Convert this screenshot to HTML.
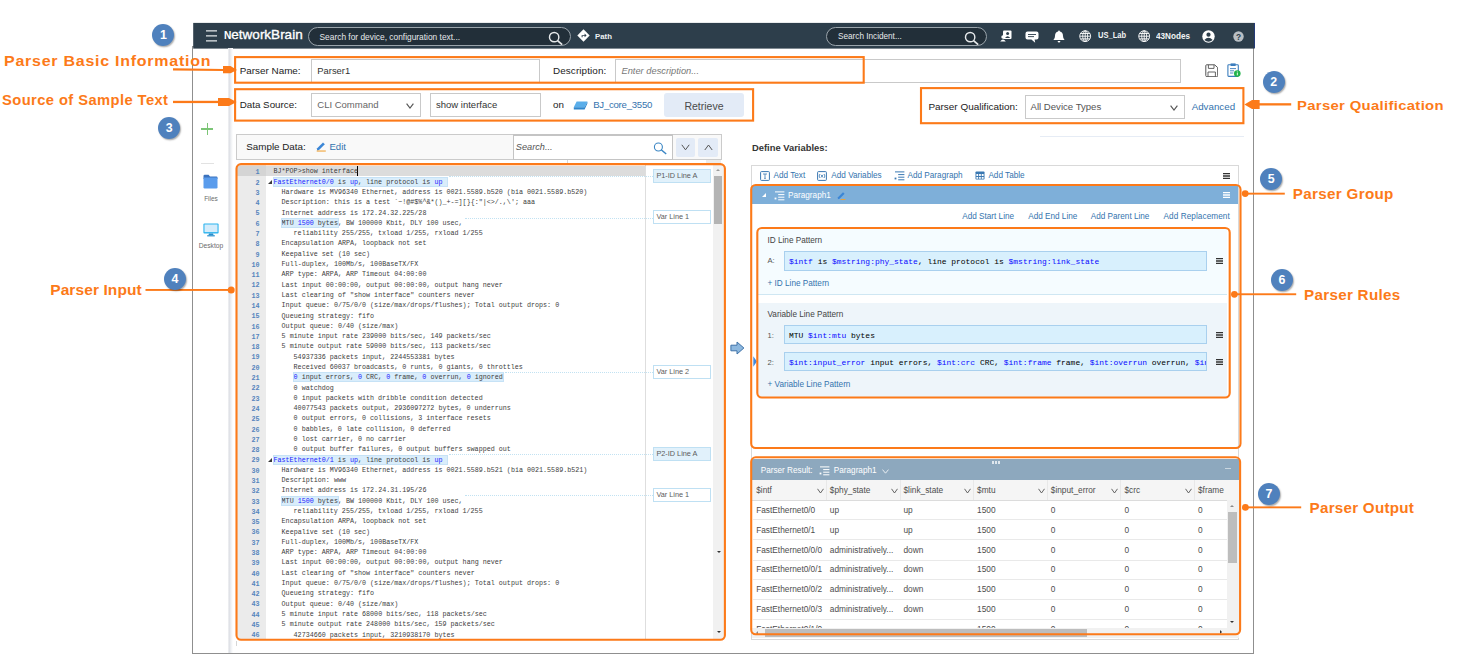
<!DOCTYPE html>
<html><head><meta charset="utf-8"><title>Parser</title>
<style>
html,body{margin:0;padding:0;background:#fff;}
body{width:1474px;height:668px;position:relative;overflow:hidden;font-family:"Liberation Sans",sans-serif;color:#333;}
div,svg,span{position:absolute;box-sizing:border-box;}
.cl span,.cl b,.inp span,.inp b{position:static;}
.ob{border:2px solid #fc7a19;}
.ann{color:#fc7a19;font-weight:bold;white-space:nowrap;line-height:1;}
.circ{width:22px;height:22px;border-radius:50%;background:#4f81bd;color:#fff;font-weight:bold;font-size:12.4px;line-height:22.4px;text-align:center;box-shadow:1px 1.2px 1.6px rgba(0,0,0,.33);}
.t{white-space:nowrap;line-height:1;}
.lbl{font-size:9.9px;color:#222;white-space:nowrap;line-height:12px;}
.box{border:1px solid #c9c9c9;background:#fff;}
.lk{color:#3473ae;}
.sm{font-size:8.2px;white-space:nowrap;line-height:10px;}
/* code */
.ln{left:238px;width:21.6px;text-align:right;font:bold 6.75px/10.29px "Liberation Mono",monospace;color:#5685bd;height:10.29px;}
.cl{font:6.71px/10.29px "Liberation Mono",monospace;color:#3d3d3d;white-space:pre;height:10.29px;}
.cl b{color:#1a1aff;font-weight:normal;}
.hl{background:#d9edfb;outline:0.6px solid #c6e2f6;}
.fold{left:268.2px;width:0;height:0;border-left:4.2px solid transparent;border-bottom:4.2px solid #3a3a3a;}
.dot{height:0;border-top:0.8px dotted #c2e2f2;}
.lab{left:653px;width:58px;height:14px;border:1px solid #bfe0f3;background:#fff;font-size:7.3px;line-height:12.6px;padding-left:2.4px;color:#5c5c5c;white-space:nowrap;}
.lab.f{background:#e1f1fb;}
/* pattern inputs */
.inp{left:783.8px;width:423.2px;height:19.3px;background:#d8f0fd;border:1px solid #a9d0ee;font:7.96px/19.3px "Liberation Mono",monospace;color:#000;white-space:pre;overflow:hidden;padding-left:4.2px;}
.inp b{color:#0a0aff;font-weight:normal;}
.ham{width:7.5px;height:6.4px;border-top:1.4px solid #333;border-bottom:1.4px solid #333;}
.ham:after{content:"";position:absolute;left:0;right:0;top:1.1px;height:1.4px;background:#333;}
.ham.w{border-color:#fff;}.ham.w:after{background:#fff;}
/* table */
.th,.td{font-size:8.3px;line-height:12px;white-space:nowrap;color:#4d4d4d;}
.th{top:484.2px;}
.thv{top:488px;}
.tsep{top:480px;width:1px;height:20px;background:#e8e8e8;}
.rsep{left:753px;width:474px;height:1px;background:#e9e9e9;}
</style></head><body>

<!-- window frame -->
<div style="left:192px;top:46px;width:1062px;height:607.5px;border:1px solid #8f8f8f;background:#fff;"></div>
<!-- header -->
<svg style="left:0;top:0" width="1474" height="60" viewBox="0 0 1474 60"><rect x="193.2" y="22.9" width="1061.5" height="25.7" fill="#2d3e4b"/></svg>
<svg style="left:205px;top:28px" width="14" height="16" viewBox="0 0 14 16"><path d="M1 2.9 H12 M1 7.9 H12 M1 12.9 H12" stroke="#e4e7ea" stroke-width="1.4"/></svg>
<div class="t" style="left:224px;top:27.8px;font-size:13.5px;color:#fff;-webkit-text-stroke:0.35px #fff;"><span style="position:static;font-size:10.2px;font-weight:bold;-webkit-text-stroke:0;">N</span>etworkBrain</div>
<div style="left:308px;top:27px;width:263px;height:19px;border:1px solid #9aa4ab;border-radius:9.5px;background:#222f39;"></div>
<div class="t" style="left:319.5px;top:33.2px;font-size:8.4px;color:#e6e9eb;">Search for device, configuration text...</div>
<svg style="left:548.4px;top:31px" width="15.4" height="15.4" viewBox="0 0 14 14"><circle cx="5.6" cy="5.6" r="4.25" fill="none" stroke="#e6e9eb" stroke-width="1.3"/><path d="M8.7 8.7 L12.9 12.4" stroke="#e6e9eb" stroke-width="1.6"/></svg>
<svg style="left:577px;top:29px" width="13" height="13" viewBox="0 0 13 13"><path d="M6.5 0.3 L12.7 6.5 L6.5 12.7 L0.3 6.5 Z" fill="#fff"/><path d="M4.6 8.3 V6.2 H7.6 V4.6 L9.6 6.4 L7.6 8.2 V7.1 H5.6 V8.3 Z" fill="#2d3e4b"/></svg>
<div class="t" style="left:595px;top:32.6px;font-size:7.8px;font-weight:bold;color:#eef0f2;">Path</div>
<div style="left:826px;top:27px;width:161px;height:19px;border:1px solid #9aa4ab;border-radius:9.5px;background:#222f39;"></div>
<div class="t" style="left:838px;top:33.2px;font-size:8.2px;color:#e6e9eb;">Search Incident...</div>
<svg style="left:964.4px;top:31.2px" width="15.4" height="15.4" viewBox="0 0 14 14"><circle cx="5.6" cy="5.6" r="4.25" fill="none" stroke="#e6e9eb" stroke-width="1.3"/><path d="M8.7 8.7 L12.9 12.4" stroke="#e6e9eb" stroke-width="1.6"/></svg>
<!-- header right icons -->
<svg style="left:1000px;top:30px" width="12" height="12" viewBox="0 0 12 12"><rect x="3" y="0.5" width="8.5" height="8.5" rx="1" fill="#fff"/><circle cx="7.6" cy="3.6" r="1.5" fill="#2d3e4b"/><path d="M5 8 Q7.6 4.6 10.2 8 Z" fill="#2d3e4b"/><circle cx="3" cy="7" r="1.7" fill="#fff"/><path d="M0.2 11.6 Q3 7.2 5.8 11.6 Z" fill="#fff"/></svg>
<svg style="left:1025.2px;top:30.6px" width="14" height="13" viewBox="0 0 14 13"><path d="M2.5 0.5 H11.5 Q13.5 0.5 13.5 2.5 V6.5 Q13.5 8.5 11.5 8.5 H9.6 L10.2 11.8 L6.4 8.5 H2.5 Q0.5 8.5 0.5 6.5 V2.5 Q0.5 0.5 2.5 0.5 Z" fill="#fff"/><rect x="3" y="3" width="8" height="0.9" fill="#2d3e4b"/><rect x="3" y="5.2" width="6" height="0.9" fill="#2d3e4b"/></svg>
<svg style="left:1052.8px;top:29.8px" width="12" height="13" viewBox="0 0 12 13"><path d="M6 0.6 Q6.9 0.6 6.9 1.6 Q10 2.4 10 6 Q10 8.6 11.6 10 H0.4 Q2 8.6 2 6 Q2 2.4 5.1 1.6 Q5.1 0.6 6 0.6 Z" fill="#fff"/><path d="M4.6 10.9 H7.4 Q7.2 12.5 6 12.5 Q4.8 12.5 4.6 10.9 Z" fill="#fff"/></svg>
<svg style="left:1079.2px;top:30.1px" width="12.4" height="12.4" viewBox="0 0 13 13"><g fill="none" stroke="#fff" stroke-width="0.95"><circle cx="6.5" cy="6.5" r="5.7"/><ellipse cx="6.5" cy="6.5" rx="2.6" ry="5.7"/><path d="M6.5 0.8 V12.2 M0.8 6.5 H12.2 M1.6 3.7 H11.4 M1.6 9.3 H11.4"/></g></svg>
<div class="t" style="left:1097.8px;top:31.6px;font-size:8.2px;font-weight:bold;color:#f2f4f5;transform-origin:0 0;transform:scaleX(0.92);">US_Lab</div>
<svg style="left:1138px;top:30.1px" width="12.4" height="12.4" viewBox="0 0 13 13"><g fill="none" stroke="#fff" stroke-width="0.95"><circle cx="6.5" cy="6.5" r="5.7"/><ellipse cx="6.5" cy="6.5" rx="2.6" ry="5.7"/><path d="M6.5 0.8 V12.2 M0.8 6.5 H12.2 M1.6 3.7 H11.4 M1.6 9.3 H11.4"/></g></svg>
<div class="t" style="left:1155.6px;top:31.6px;font-size:8.4px;font-weight:bold;color:#f2f4f5;transform-origin:0 0;transform:scaleX(0.975);">43Nodes</div>
<svg style="left:1202.2px;top:29.7px" width="13" height="13" viewBox="0 0 13 13"><circle cx="6.5" cy="6.5" r="6.2" fill="#fff"/><circle cx="6.5" cy="4.7" r="2.1" fill="#2d3e4b"/><path d="M2.3 10 Q6.5 5.4 10.7 10 Q6.5 13.4 2.3 10 Z" fill="#2d3e4b"/></svg>
<svg style="left:1232.6px;top:30.6px" width="11" height="11" viewBox="0 0 11 11"><circle cx="5.5" cy="5.5" r="5.2" fill="#b9bfc4"/><text x="5.5" y="8.5" font-family="Liberation Sans, sans-serif" font-size="8.4" font-weight="bold" fill="#2d3e4b" text-anchor="middle">?</text></svg>

<div style="left:1254px;top:23px;width:1px;height:25px;background:#243a78;"></div>
<!-- sidebar -->
<div style="left:228px;top:48px;width:5px;height:605px;background:linear-gradient(90deg,#f1f2f4,#e0e2e7 30%,#eef0f3 60%,#ffffff);"></div>
<div style="left:201px;top:128.4px;width:12.4px;height:1.2px;background:#7cc576;"></div>
<div style="left:206.6px;top:122.8px;width:1.2px;height:12.4px;background:#7cc576;"></div>
<div style="left:200.5px;top:162.6px;width:13.5px;height:1px;background:#e2e2e2;"></div>
<svg style="left:203.2px;top:174.2px" width="15" height="15" viewBox="0 0 15 15"><path d="M0.5 2 Q0.5 0.8 1.7 0.8 H5.6 L7 2.4 H13.3 Q14.5 2.4 14.5 3.6 V5 H0.5 Z" fill="#3b72bd"/><rect x="0.5" y="3.6" width="14" height="10.8" rx="1.2" fill="#5a9cec"/></svg>
<div class="t" style="left:196px;top:196px;width:30px;text-align:center;font-size:6.5px;color:#6c6c6c;">Files</div>
<svg style="left:203.2px;top:222.6px" width="16" height="14" viewBox="0 0 16 14"><rect x="0.4" y="0.4" width="15.2" height="10" rx="1" fill="#2cb4ee"/><rect x="1.5" y="1.5" width="13" height="7.6" fill="#d4ecfb"/><path d="M6 10.4 H10 L10.6 12.3 H5.4 Z" fill="#2a8fcc"/><rect x="4.2" y="12.2" width="7.6" height="1.2" fill="#2a8fcc"/></svg>
<div class="t" style="left:196px;top:243px;width:30px;text-align:center;font-size:6.7px;color:#6c6c6c;">Desktop</div>

<!-- form row 1 -->
<div class="lbl" style="left:239.7px;top:64.7px;">Parser Name:</div>
<div class="box" style="left:311.2px;top:59.2px;width:228.6px;height:24px;"></div>
<div class="lbl" style="left:317.3px;top:64.7px;font-size:9.4px;color:#333;">Parser1</div>
<div class="lbl" style="left:553px;top:64.7px;font-size:9.9px;letter-spacing:0.1px;">Description:</div>
<div class="box" style="left:615.3px;top:59.2px;width:565.6px;height:24px;"></div>
<div class="lbl" style="left:621.5px;top:64.7px;font-size:9.3px;font-style:italic;color:#777;">Enter description...</div>
<svg style="left:1204.8px;top:63.6px" width="13.5" height="13.5" viewBox="0 0 13.5 13.5"><path d="M1.6 0.8 H9.6 L12.7 3.6 V11.6 Q12.7 12.7 11.6 12.7 H1.9 Q0.8 12.7 0.8 11.6 V1.6 Q0.8 0.8 1.6 0.8 Z" fill="#fff" stroke="#555" stroke-width="1"/><path d="M3.4 0.9 V4.4 H9 V0.9" fill="none" stroke="#555" stroke-width="0.9"/><path d="M3 12.6 V8 H10.4 V12.6" fill="none" stroke="#555" stroke-width="0.9"/></svg>
<svg style="left:1226.6px;top:63px" width="14" height="14.5" viewBox="0 0 14 14.5"><rect x="0.9" y="1.8" width="10.4" height="11.6" rx="0.8" fill="#fff" stroke="#3b7dbd" stroke-width="1.1"/><rect x="3.6" y="0.4" width="5" height="2.6" fill="#3b7dbd"/><path d="M3 5.6 H9 M3 7.8 H7 M3 10 H6.4" stroke="#3b7dbd" stroke-width="0.9"/><circle cx="10.3" cy="10.6" r="3.3" fill="#21b34b"/><rect x="9.85" y="9.9" width="0.9" height="2.4" fill="#fff"/><rect x="9.85" y="8.5" width="0.9" height="0.9" fill="#fff"/></svg>

<!-- form row 2 -->
<div class="lbl" style="left:239.7px;top:98.9px;font-size:9.8px;">Data Source:</div>
<div class="box" style="left:311.2px;top:93px;width:109.4px;height:24px;"></div>
<div class="lbl" style="left:317.3px;top:98.9px;font-size:9.5px;color:#666;">CLI Command</div>
<svg style="left:406.4px;top:102.8px" width="8" height="6" viewBox="0 0 8 6"><path d="M0.6 0.6 L4 5 L7.4 0.6" fill="none" stroke="#555" stroke-width="1.15"/></svg>
<div class="box" style="left:430.2px;top:93px;width:110.6px;height:24px;"></div>
<div class="lbl" style="left:436px;top:98.9px;font-size:9.5px;color:#333;">show interface</div>
<div class="lbl" style="left:553px;top:99.4px;font-size:9.8px;">on</div>
<svg style="left:573.4px;top:100.6px" width="15" height="9" viewBox="0 0 15 9"><path d="M3.6 0.6 H14.4 L11.6 6.2 H0.8 Z" fill="#5aaeea"/><path d="M0.8 6.2 H11.6 L14.4 0.6 V2.6 L11.6 8.4 H0.8 Z" fill="#2f86cc"/></svg>
<div class="lbl lk" style="left:593.2px;top:99.2px;font-size:9.6px;letter-spacing:-0.25px;">BJ_core_3550</div>
<div style="left:664.2px;top:93px;width:79.6px;height:24px;background:#e3ebf7;border-radius:3px;"></div>
<div class="lbl" style="left:664.2px;top:100px;width:79.6px;text-align:center;font-size:10.5px;color:#4a4a4a;">Retrieve</div>

<div class="lbl" style="left:928.4px;top:100.6px;font-size:9.95px;">Parser Qualification:</div>
<div class="box" style="left:1025px;top:95px;width:159.8px;height:24px;"></div>
<div class="lbl" style="left:1030.5px;top:100.6px;font-size:9.6px;color:#555;">All Device Types</div>
<svg style="left:1170.4px;top:104.6px" width="8" height="6" viewBox="0 0 8 6"><path d="M0.6 0.6 L4 5 L7.4 0.6" fill="none" stroke="#555" stroke-width="1.15"/></svg>
<div class="lbl lk" style="left:1191.7px;top:100.6px;font-size:9.75px;">Advanced</div>
<div style="left:1040px;top:135.8px;width:204px;height:1px;background:#e6ecf5;"></div>

<!-- sample data bar -->
<div style="left:236px;top:134px;width:486px;height:26px;border:1px solid #cbcbcb;background:#f9f9f9;"></div>
<div class="lbl" style="left:246.3px;top:140.6px;font-size:9.8px;">Sample Data:</div>
<svg style="left:315.8px;top:141.2px" width="10.5" height="10.5" viewBox="0 0 9 9"><path d="M1 6.2 L6 1.2 L7.6 2.8 L2.6 7.8 L0.8 8.2 Z" fill="#3b86d6"/><path d="M0.6 8.6 H8.4" stroke="#f0a030" stroke-width="0.9"/></svg>
<div class="lbl lk" style="left:329.4px;top:140.6px;font-size:9.6px;">Edit</div>
<div style="left:513px;top:134px;width:160px;height:26px;border:1px solid #c4c4c4;border-top-width:2px;background:#fff;"></div>
<div class="lbl" style="left:515.8px;top:140.6px;font-size:9.2px;font-style:italic;color:#555;">Search...</div>
<svg style="left:653.4px;top:141.6px" width="15" height="13" viewBox="0 0 15 13"><circle cx="5.4" cy="5" r="4" fill="none" stroke="#3b86c4" stroke-width="1.1"/><path d="M8.2 7.8 L13.2 12" stroke="#3b86c4" stroke-width="1.5"/></svg>
<div style="left:676px;top:138px;width:19.2px;height:18.8px;background:#e3ebf7;border-radius:2px;"></div>
<div style="left:698px;top:138px;width:19.8px;height:18.8px;background:#e3ebf7;border-radius:2px;"></div>
<svg style="left:681.4px;top:144.4px" width="9" height="7" viewBox="0 0 9 7"><path d="M0.8 0.8 L4.5 5.8 L8.2 0.8" fill="none" stroke="#555" stroke-width="1"/></svg>
<svg style="left:703.6px;top:144.2px" width="9" height="7" viewBox="0 0 9 7"><path d="M0.8 6 L4.5 1 L8.2 6" fill="none" stroke="#555" stroke-width="1"/></svg>
<div style="left:566.5px;top:159.5px;width:1px;height:4px;background:#d8d8d8;"></div>
<div style="left:706px;top:159.5px;width:15px;height:4px;background:#ececec;"></div>

<!-- code editor -->
<div style="left:237.4px;top:164.8px;width:28.9px;height:474px;background:#ebebeb;"></div>
<div style="left:237.4px;top:165.8px;width:28.9px;height:10.4px;background:#d4d4d4;"></div>
<div style="left:266.3px;top:165.8px;width:379.3px;height:10.4px;background:#dcdcdc;"></div>
<div style="left:645.4px;top:164.8px;width:1px;height:474px;background:#dedede;"></div>
<div style="left:713px;top:164.8px;width:11px;height:474px;background:#f1f1f1;"></div>
<div style="left:713.8px;top:176.4px;width:8.2px;height:47.2px;background:#b4b4b4;"></div>
<div style="left:715.8px;top:169.2px;width:0;height:0;border-left:2.3px solid transparent;border-right:2.3px solid transparent;border-bottom:2.6px solid #9a9a9a;"></div>
<div style="left:717.4px;top:551px;width:0;height:0;border-left:2.2px solid transparent;border-right:2.2px solid transparent;border-top:2.6px solid #333;"></div>
<div style="left:717.4px;top:631.4px;width:0;height:0;border-left:2.2px solid transparent;border-right:2.2px solid transparent;border-top:2.6px solid #333;"></div>
<div style="left:357.3px;top:165.6px;width:1px;height:10.8px;background:#000;"></div>
<div class="ln" style="top:167.25px">1</div>
<div class="cl" style="top:166.45px;left:273.5px">BJ*POP&gt;show interface</div>
<div class="ln" style="top:177.54px">2</div>
<div class="cl" style="top:176.74px;left:273.5px"><span class="hl"><b>FastEthernet0/0</b> is <b>up</b>, line protocol is <b>up</b> </span></div>
<div class="fold" style="top:179.84px"></div>
<div class="dot" style="top:176.34px;left:449.1px;width:204.4px"></div>
<div class="lab f" style="top:169.14px">P1-ID Line A</div>
<div class="ln" style="top:187.84px">3</div>
<div class="cl" style="top:187.03px;left:281.6px">Hardware is MV96340 Ethernet, address is 0021.5589.b520 (bia 0021.5589.b520)</div>
<div class="ln" style="top:198.12px">4</div>
<div class="cl" style="top:197.32px;left:281.6px">Description: this is a test `~!@#$%^&amp;*()_+-=][}{:"|&lt;&gt;/.,\'; aaa</div>
<div class="ln" style="top:208.41px">5</div>
<div class="cl" style="top:207.61px;left:281.6px">Internet address is 172.24.32.225/28</div>
<div class="ln" style="top:218.70px">6</div>
<div class="cl" style="top:217.90px;left:281.6px"><span class="hl">MTU <b>1500</b> bytes</span>, BW 100000 Kbit, DLY 100 usec,</div>
<div class="dot" style="top:217.50px;left:465.2px;width:188.3px"></div>
<div class="lab" style="top:210.30px">Var Line 1</div>
<div class="ln" style="top:228.99px">7</div>
<div class="cl" style="top:228.19px;left:293.6px">reliability 255/255, txload 1/255, rxload 1/255</div>
<div class="ln" style="top:239.28px">8</div>
<div class="cl" style="top:238.48px;left:281.6px">Encapsulation ARPA, loopback not set</div>
<div class="ln" style="top:249.57px">9</div>
<div class="cl" style="top:248.77px;left:281.6px">Keepalive set (10 sec)</div>
<div class="ln" style="top:259.87px">10</div>
<div class="cl" style="top:259.06px;left:281.6px">Full-duplex, 100Mb/s, 100BaseTX/FX</div>
<div class="ln" style="top:270.16px">11</div>
<div class="cl" style="top:269.36px;left:281.6px">ARP type: ARPA, ARP Timeout 04:00:00</div>
<div class="ln" style="top:280.44px">12</div>
<div class="cl" style="top:279.64px;left:281.6px">Last input 00:00:00, output 00:00:00, output hang never</div>
<div class="ln" style="top:290.74px">13</div>
<div class="cl" style="top:289.94px;left:281.6px">Last clearing of "show interface" counters never</div>
<div class="ln" style="top:301.03px">14</div>
<div class="cl" style="top:300.23px;left:281.6px">Input queue: 0/75/0/0 (size/max/drops/flushes); Total output drops: 0</div>
<div class="ln" style="top:311.31px">15</div>
<div class="cl" style="top:310.51px;left:281.6px">Queueing strategy: fifo</div>
<div class="ln" style="top:321.61px">16</div>
<div class="cl" style="top:320.81px;left:281.6px">Output queue: 0/40 (size/max)</div>
<div class="ln" style="top:331.90px">17</div>
<div class="cl" style="top:331.10px;left:281.6px">5 minute input rate 239000 bits/sec, 149 packets/sec</div>
<div class="ln" style="top:342.19px">18</div>
<div class="cl" style="top:341.38px;left:281.6px">5 minute output rate 59000 bits/sec, 113 packets/sec</div>
<div class="ln" style="top:352.47px">19</div>
<div class="cl" style="top:351.67px;left:293.6px">54937336 packets input, 2244553381 bytes</div>
<div class="ln" style="top:362.77px">20</div>
<div class="cl" style="top:361.97px;left:293.6px">Received 60037 broadcasts, 0 runts, 0 giants, 0 throttles</div>
<div class="ln" style="top:373.06px">21</div>
<div class="cl" style="top:372.25px;left:293.6px"><span class="hl"><b>0</b> input errors, <b>0</b> CRC, <b>0</b> frame, <b>0</b> overrun, <b>0</b> ignored</span></div>
<div class="dot" style="top:371.86px;left:505.4px;width:148.1px"></div>
<div class="lab" style="top:364.65px">Var Line 2</div>
<div class="ln" style="top:383.34px">22</div>
<div class="cl" style="top:382.54px;left:293.6px">0 watchdog</div>
<div class="ln" style="top:393.64px">23</div>
<div class="cl" style="top:392.84px;left:293.6px">0 input packets with dribble condition detected</div>
<div class="ln" style="top:403.93px">24</div>
<div class="cl" style="top:403.12px;left:293.6px">40077543 packets output, 2936097272 bytes, 0 underruns</div>
<div class="ln" style="top:414.21px">25</div>
<div class="cl" style="top:413.41px;left:293.6px">0 output errors, 0 collisions, 3 interface resets</div>
<div class="ln" style="top:424.51px">26</div>
<div class="cl" style="top:423.71px;left:293.6px">0 babbles, 0 late collision, 0 deferred</div>
<div class="ln" style="top:434.80px">27</div>
<div class="cl" style="top:434.00px;left:293.6px">0 lost carrier, 0 no carrier</div>
<div class="ln" style="top:445.08px">28</div>
<div class="cl" style="top:444.28px;left:293.6px">0 output buffer failures, 0 output buffers swapped out</div>
<div class="ln" style="top:455.38px">29</div>
<div class="cl" style="top:454.58px;left:273.5px"><span class="hl"><b>FastEthernet0/1</b> is <b>up</b>, line protocol is <b>up</b> </span></div>
<div class="fold" style="top:457.68px"></div>
<div class="dot" style="top:454.18px;left:449.1px;width:204.4px"></div>
<div class="lab f" style="top:446.98px">P2-ID Line A</div>
<div class="ln" style="top:465.67px">30</div>
<div class="cl" style="top:464.87px;left:281.6px">Hardware is MV96340 Ethernet, address is 0021.5589.b521 (bia 0021.5589.b521)</div>
<div class="ln" style="top:475.95px">31</div>
<div class="cl" style="top:475.15px;left:281.6px">Description: www</div>
<div class="ln" style="top:486.24px">32</div>
<div class="cl" style="top:485.44px;left:281.6px">Internet address is 172.24.31.195/26</div>
<div class="ln" style="top:496.54px">33</div>
<div class="cl" style="top:495.74px;left:281.6px"><span class="hl">MTU <b>1500</b> bytes</span>, BW 100000 Kbit, DLY 100 usec,</div>
<div class="dot" style="top:495.34px;left:465.2px;width:188.3px"></div>
<div class="lab" style="top:488.13px">Var Line 1</div>
<div class="ln" style="top:506.82px">34</div>
<div class="cl" style="top:506.02px;left:293.6px">reliability 255/255, txload 1/255, rxload 1/255</div>
<div class="ln" style="top:517.11px">35</div>
<div class="cl" style="top:516.31px;left:281.6px">Encapsulation ARPA, loopback not set</div>
<div class="ln" style="top:527.40px">36</div>
<div class="cl" style="top:526.61px;left:281.6px">Keepalive set (10 sec)</div>
<div class="ln" style="top:537.69px">37</div>
<div class="cl" style="top:536.89px;left:281.6px">Full-duplex, 100Mb/s, 100BaseTX/FX</div>
<div class="ln" style="top:547.98px">38</div>
<div class="cl" style="top:547.18px;left:281.6px">ARP type: ARPA, ARP Timeout 04:00:00</div>
<div class="ln" style="top:558.27px">39</div>
<div class="cl" style="top:557.48px;left:281.6px">Last input 00:00:00, output 00:00:00, output hang never</div>
<div class="ln" style="top:568.56px">40</div>
<div class="cl" style="top:567.76px;left:281.6px">Last clearing of "show interface" counters never</div>
<div class="ln" style="top:578.85px">41</div>
<div class="cl" style="top:578.05px;left:281.6px">Input queue: 0/75/0/0 (size/max/drops/flushes); Total output drops: 0</div>
<div class="ln" style="top:589.14px">42</div>
<div class="cl" style="top:588.35px;left:281.6px">Queueing strategy: fifo</div>
<div class="ln" style="top:599.43px">43</div>
<div class="cl" style="top:598.63px;left:281.6px">Output queue: 0/40 (size/max)</div>
<div class="ln" style="top:609.72px">44</div>
<div class="cl" style="top:608.92px;left:281.6px">5 minute input rate 68000 bits/sec, 118 packets/sec</div>
<div class="ln" style="top:620.01px">45</div>
<div class="cl" style="top:619.22px;left:281.6px">5 minute output rate 248000 bits/sec, 159 packets/sec</div>
<div class="ln" style="top:630.30px">46</div>
<div class="cl" style="top:629.50px;left:293.6px">42734660 packets input, 3210938170 bytes</div>

<div style="left:236px;top:641px;width:1px;height:5px;background:#d6d6d6;"></div>
<!-- middle arrow -->
<svg style="left:730px;top:340.9px" width="15" height="14" viewBox="0 0 15 14"><path d="M0.9 4.2 H7 V1 L13.9 7 L7 13 V9.8 H0.9 Z" fill="#8db8df" stroke="#3f72a8" stroke-width="1"/></svg>

<!-- define variables -->
<div class="t" style="left:752px;top:143px;font-size:9.4px;font-weight:bold;color:#333;">Define Variables:</div>
<div style="left:751.2px;top:165px;width:487.8px;height:474.6px;border:1px solid #d9d9d9;background:#fff;"></div>
<!-- toolbar -->
<svg style="left:760.2px;top:170.8px" width="10" height="10" viewBox="0 0 10 10"><rect x="0.6" y="0.6" width="8.8" height="8.8" rx="0.8" fill="none" stroke="#3a78b2" stroke-width="1"/><path d="M3 3 H7 M5 3 V7.4 M4.2 7.4 H5.8" stroke="#3a78b2" stroke-width="0.8" fill="none"/></svg>
<div class="sm lk" style="left:773.5px;top:171px;">Add Text</div>
<svg style="left:817.2px;top:170.8px" width="10" height="10" viewBox="0 0 10 10"><rect x="0.6" y="0.6" width="8.8" height="8.8" rx="0.8" fill="none" stroke="#3a78b2" stroke-width="1"/><path d="M2.6 3.2 Q1.8 5 2.6 6.8 M7.4 3.2 Q8.2 5 7.4 6.8 M3.8 3.6 L6.2 6.6 M6.2 3.6 L3.8 6.6" stroke="#3a78b2" stroke-width="0.8" fill="none"/></svg>
<div class="sm lk" style="left:831.3px;top:171px;">Add Variables</div>
<svg style="left:893.6px;top:170.6px" width="11" height="10" viewBox="0 0 11 10"><path d="M1 0.9 H10.4 M4.2 3.6 H10.4 M4.2 6.2 H10.4 M4.2 8.8 H10.4" stroke="#3a78b2" stroke-width="1"/><rect x="0.6" y="6.6" width="1.8" height="1.8" fill="#3a78b2"/></svg>
<div class="sm lk" style="left:907.5px;top:171px;">Add Paragraph</div>
<svg style="left:974.8px;top:171.2px" width="10" height="9" viewBox="0 0 10 9"><rect x="0.5" y="0.5" width="9" height="8" rx="0.8" fill="#3a78b2"/><path d="M1.4 3 H8.6 V5 H1.4 Z M1.4 6 H8.6 V7.8 H1.4 Z" fill="#fff"/><path d="M3.6 2.6 V8 M6.3 2.6 V8" stroke="#3a78b2" stroke-width="0.9"/></svg>
<div class="sm lk" style="left:988.4px;top:171px;">Add Table</div>
<svg style="left:1222.2px;top:170.9px" width="9" height="10" viewBox="0 0 9 10"><path d="M1 2.6 H8 M1 5 H8 M1 7.4 H8" stroke="#333" stroke-width="1.35"/></svg>
<!-- paragraph bar -->
<div style="left:752.2px;top:186.2px;width:486px;height:17.7px;background:#7eafd9;"></div>
<div style="left:762.2px;top:193.2px;width:0;height:0;border-left:4.2px solid transparent;border-bottom:4.2px solid #fff;"></div>
<svg style="left:773.8px;top:190.6px" width="11" height="10" viewBox="0 0 11 10"><path d="M1 0.9 H10.4 M4.2 3.6 H10.4 M4.2 6.2 H10.4 M4.2 8.8 H10.4" stroke="#fff" stroke-width="1"/><rect x="0.6" y="6.6" width="1.8" height="1.8" fill="#fff"/></svg>
<div class="sm" style="left:788px;top:191.3px;color:#fff;">Paragraph1</div>
<svg style="left:836.8px;top:190.8px" width="9" height="9" viewBox="0 0 9 9"><path d="M1 6.2 L6 1.2 L7.6 2.8 L2.6 7.8 L0.8 8.2 Z" fill="#3b86d6"/><path d="M3.6 8.5 H8.4" stroke="#f0a030" stroke-width="0.9"/></svg>
<svg style="left:1222.2px;top:190.1px" width="9" height="10" viewBox="0 0 9 10"><path d="M1 2.6 H8 M1 5 H8 M1 7.4 H8" stroke="#fff" stroke-width="1.35"/></svg>
<div class="sm lk" style="left:962.2px;top:211.9px;">Add Start Line</div>
<div class="sm lk" style="left:1028.2px;top:211.9px;">Add End Line</div>
<div class="sm lk" style="left:1090.7px;top:211.9px;">Add Parent Line</div>
<div class="sm lk" style="left:1163.5px;top:211.9px;letter-spacing:0.08px;">Add Replacement</div>
<!-- ID line section -->
<div style="left:758.4px;top:228.5px;width:469px;height:66.2px;background:#f5fcff;border-bottom:1px solid #cfe7f3;"></div>
<div class="sm" style="left:767.5px;top:236.1px;color:#444;">ID Line Pattern</div>
<div class="sm" style="left:767.5px;top:256.1px;color:#555;font-size:7.6px;">A:</div>
<div class="inp" style="top:251.4px;"><b>$intf</b> is <b>$mstring:phy_state</b>, line protocol is <b>$mstring:link_state</b></div>
<svg style="left:1215.4px;top:256.4px" width="9" height="10" viewBox="0 0 9 10"><path d="M1 2.6 H8 M1 5 H8 M1 7.4 H8" stroke="#333" stroke-width="1.35"/></svg>
<div class="sm lk" style="left:767.5px;top:279.4px;">+ ID Line Pattern</div>
<!-- Variable line section -->
<div style="left:758.4px;top:302.8px;width:469px;height:94.6px;background:#eef5fa;"></div>
<div class="sm" style="left:767.5px;top:309.9px;color:#444;">Variable Line Pattern</div>
<div class="sm" style="left:767.5px;top:330.5px;color:#555;font-size:7.6px;">1:</div>
<div class="inp" style="top:325.2px;">MTU <b>$int:mtu</b> bytes</div>
<svg style="left:1215.4px;top:330.3px" width="9" height="10" viewBox="0 0 9 10"><path d="M1 2.6 H8 M1 5 H8 M1 7.4 H8" stroke="#333" stroke-width="1.35"/></svg>
<div class="sm" style="left:767.5px;top:357.6px;color:#555;font-size:7.6px;">2:</div>
<div class="inp" style="top:352px;"><b>$int:input_error</b> input errors, <b>$int:crc</b> CRC, <b>$int:frame</b> frame, <b>$int:overrun</b> overrun, <b>$int:ignored</b> ignored</div>
<svg style="left:1215.4px;top:357.3px" width="9" height="10" viewBox="0 0 9 10"><path d="M1 2.6 H8 M1 5 H8 M1 7.4 H8" stroke="#333" stroke-width="1.35"/></svg>
<div class="sm lk" style="left:767.5px;top:380.4px;">+ Variable Line Pattern</div>
<svg style="left:752.8px;top:356.4px" width="5" height="11" viewBox="0 0 5 11"><path d="M0.3 0.2 L3.9 5.5 L0.3 10.8 Z" fill="#4189dc"/></svg>

<!-- parser result -->
<div style="left:752.2px;top:458.8px;width:486.6px;height:21.6px;background:#8da8be;"></div>
<div class="sm" style="left:760.7px;top:466.3px;color:#fff;">Parser Result:</div>
<svg style="left:818.8px;top:466.2px" width="11" height="10" viewBox="0 0 11 10"><path d="M1 0.9 H10.4 M4.2 3.6 H10.4 M4.2 6.2 H10.4 M4.2 8.8 H10.4" stroke="#fff" stroke-width="1"/><rect x="0.6" y="6.6" width="1.8" height="1.8" fill="#fff"/></svg>
<div class="sm" style="left:833.8px;top:466.3px;color:#fff;">Paragraph1</div>
<svg style="left:881.6px;top:469.2px" width="7" height="5" viewBox="0 0 7 5"><path d="M0.5 0.6 L3.5 4.2 L6.5 0.6" fill="none" stroke="#fff" stroke-width="0.8"/></svg>
<div style="left:991.6px;top:461px;width:2.2px;height:2.6px;border:0.5px solid #dfe7ee;"></div>
<div style="left:994.8px;top:461px;width:2.2px;height:2.6px;border:0.5px solid #dfe7ee;"></div>
<div style="left:998px;top:461px;width:2.2px;height:2.6px;border:0.5px solid #dfe7ee;"></div>
<div style="left:1224.5px;top:467.9px;width:6.5px;height:0.9px;background:#c9d6e0;"></div>
<div style="left:752.2px;top:479.5px;width:486.6px;height:21px;background:#f5f5f5;border-bottom:1px solid #dcdcdc;"></div>
<div class="th" style="left:756.2px">$intf</div>
<svg class="thv" style="left:816.8px" width="7" height="6" viewBox="0 0 7 6"><path d="M0.5 0.8 L3.5 5 L6.5 0.8" fill="none" stroke="#555" stroke-width="0.9"/></svg>
<div class="tsep" style="left:825.8px"></div>
<div class="th" style="left:829.8px">$phy_state</div>
<svg class="thv" style="left:890.5px" width="7" height="6" viewBox="0 0 7 6"><path d="M0.5 0.8 L3.5 5 L6.5 0.8" fill="none" stroke="#555" stroke-width="0.9"/></svg>
<div class="tsep" style="left:899.5px"></div>
<div class="th" style="left:903.5px">$link_state</div>
<svg class="thv" style="left:964.1px" width="7" height="6" viewBox="0 0 7 6"><path d="M0.5 0.8 L3.5 5 L6.5 0.8" fill="none" stroke="#555" stroke-width="0.9"/></svg>
<div class="tsep" style="left:973.1px"></div>
<div class="th" style="left:977.1px">$mtu</div>
<svg class="thv" style="left:1037.8px" width="7" height="6" viewBox="0 0 7 6"><path d="M0.5 0.8 L3.5 5 L6.5 0.8" fill="none" stroke="#555" stroke-width="0.9"/></svg>
<div class="tsep" style="left:1046.8px"></div>
<div class="th" style="left:1050.8px">$input_error</div>
<svg class="thv" style="left:1111.4px" width="7" height="6" viewBox="0 0 7 6"><path d="M0.5 0.8 L3.5 5 L6.5 0.8" fill="none" stroke="#555" stroke-width="0.9"/></svg>
<div class="tsep" style="left:1120.4px"></div>
<div class="th" style="left:1124.4px">$crc</div>
<svg class="thv" style="left:1185.0px" width="7" height="6" viewBox="0 0 7 6"><path d="M0.5 0.8 L3.5 5 L6.5 0.8" fill="none" stroke="#555" stroke-width="0.9"/></svg>
<div class="tsep" style="left:1194.0px"></div>
<div class="th" style="left:1198.0px">$frame</div>
<div class="td" style="left:756.2px;top:504.0px">FastEthernet0/0</div>
<div class="td" style="left:829.8px;top:504.0px">up</div>
<div class="td" style="left:903.5px;top:504.0px">up</div>
<div class="td" style="left:977.1px;top:504.0px">1500</div>
<div class="td" style="left:1050.8px;top:504.0px">0</div>
<div class="td" style="left:1124.4px;top:504.0px">0</div>
<div class="td" style="left:1198.0px;top:504.0px">0</div>
<div class="rsep" style="top:519px"></div>
<div class="td" style="left:756.2px;top:523.8px">FastEthernet0/1</div>
<div class="td" style="left:829.8px;top:523.8px">up</div>
<div class="td" style="left:903.5px;top:523.8px">up</div>
<div class="td" style="left:977.1px;top:523.8px">1500</div>
<div class="td" style="left:1050.8px;top:523.8px">0</div>
<div class="td" style="left:1124.4px;top:523.8px">0</div>
<div class="td" style="left:1198.0px;top:523.8px">0</div>
<div class="rsep" style="top:539px"></div>
<div class="td" style="left:756.2px;top:543.5px">FastEthernet0/0/0</div>
<div class="td" style="left:829.8px;top:543.5px">administratively...</div>
<div class="td" style="left:903.5px;top:543.5px">down</div>
<div class="td" style="left:977.1px;top:543.5px">1500</div>
<div class="td" style="left:1050.8px;top:543.5px">0</div>
<div class="td" style="left:1124.4px;top:543.5px">0</div>
<div class="td" style="left:1198.0px;top:543.5px">0</div>
<div class="rsep" style="top:560px"></div>
<div class="td" style="left:756.2px;top:563.2px">FastEthernet0/0/1</div>
<div class="td" style="left:829.8px;top:563.2px">administratively...</div>
<div class="td" style="left:903.5px;top:563.2px">down</div>
<div class="td" style="left:977.1px;top:563.2px">1500</div>
<div class="td" style="left:1050.8px;top:563.2px">0</div>
<div class="td" style="left:1124.4px;top:563.2px">0</div>
<div class="td" style="left:1198.0px;top:563.2px">0</div>
<div class="rsep" style="top:579px"></div>
<div class="td" style="left:756.2px;top:583.0px">FastEthernet0/0/2</div>
<div class="td" style="left:829.8px;top:583.0px">administratively...</div>
<div class="td" style="left:903.5px;top:583.0px">down</div>
<div class="td" style="left:977.1px;top:583.0px">1500</div>
<div class="td" style="left:1050.8px;top:583.0px">0</div>
<div class="td" style="left:1124.4px;top:583.0px">0</div>
<div class="td" style="left:1198.0px;top:583.0px">0</div>
<div class="rsep" style="top:599px"></div>
<div class="td" style="left:756.2px;top:602.8px">FastEthernet0/0/3</div>
<div class="td" style="left:829.8px;top:602.8px">administratively...</div>
<div class="td" style="left:903.5px;top:602.8px">down</div>
<div class="td" style="left:977.1px;top:602.8px">1500</div>
<div class="td" style="left:1050.8px;top:602.8px">0</div>
<div class="td" style="left:1124.4px;top:602.8px">0</div>
<div class="td" style="left:1198.0px;top:602.8px">0</div>
<div class="rsep" style="top:619px"></div>
<div class="td" style="left:756.2px;top:622.5px">FastEthernet0/1/0</div>
<div class="td" style="left:829.8px;top:622.5px"></div>
<div class="td" style="left:903.5px;top:622.5px"></div>
<div class="td" style="left:977.1px;top:622.5px">1500</div>
<div class="td" style="left:1050.8px;top:622.5px">0</div>
<div class="td" style="left:1124.4px;top:622.5px">0</div>
<div class="td" style="left:1198.0px;top:622.5px">0</div>
<!-- scrollbars -->
<div style="left:1227.2px;top:500.3px;width:11.6px;height:137.3px;background:#f1f1f1;"></div>
<div style="left:1228.2px;top:511.8px;width:8.8px;height:51.3px;background:#bdbdbd;"></div>
<div style="left:1230.4px;top:504.8px;width:0;height:0;border-left:2.2px solid transparent;border-right:2.2px solid transparent;border-bottom:2.6px solid #8a8a8a;"></div>
<div style="left:1230.4px;top:621px;width:0;height:0;border-left:2.2px solid transparent;border-right:2.2px solid transparent;border-top:2.6px solid #333;"></div>
<div style="left:752.2px;top:628.4px;width:475px;height:9.2px;background:#f1f1f1;"></div>
<div style="left:765px;top:629px;width:321.8px;height:8.2px;background:#bdbdbd;"></div>
<div style="left:756.4px;top:630.8px;width:0;height:0;border-top:2.2px solid transparent;border-bottom:2.2px solid transparent;border-right:2.6px solid #8a8a8a;"></div>
<div style="left:1219.6px;top:630.2px;width:0;height:0;border-top:2.2px solid transparent;border-bottom:2.2px solid transparent;border-left:2.6px solid #333;"></div>

<!-- orange boxes -->
<svg style="left:0;top:0" width="1474" height="668" viewBox="0 0 1474 668"><g fill="none" stroke="#fc7a19" stroke-width="2.1">
<rect x="235.1" y="57.1" width="628.6" height="25.6" rx="0"/>
<rect x="235.1" y="89.2" width="518.0" height="31.4" rx="0"/>
<rect x="921.0" y="88.1" width="322.4" height="35.1" rx="0"/>
<rect x="236.5" y="164.1" width="488.4" height="475.7" rx="4.5"/>
<rect x="751.2" y="185.0" width="489.3" height="263.0" rx="4.5"/>
<rect x="757.3" y="228.0" width="472.4" height="169.5" rx="4.5"/>
<rect x="751.2" y="457.3" width="488.9" height="177.0" rx="4.5"/>
</g></svg>

<!-- annotation arrows / lines -->
<svg style="left:0;top:0" width="1474" height="668" viewBox="0 0 1474 668">
<g fill="#fc7a19" stroke="none">
<path d="M173 68.2 L224 68.9 V71.1 L173 70.4 Z"/>
<path d="M223 66.1 H230.5 L237 69.9 L230.5 73.3 H223 Z"/>
<rect x="173" y="100.8" width="46" height="2.3"/>
<path d="M218 97.9 H229 L236.6 102 L229 106.1 H218 Z"/>
<rect x="1258" y="103.2" width="33.2" height="2.3"/>
<path d="M1244.4 104.4 L1252 99.9 H1259.6 V109.1 H1252 Z"/>
<rect x="145.5" y="289" width="86" height="1.9"/><circle cx="231.2" cy="290" r="3.5"/>
<rect x="1245" y="192.7" width="39.8" height="1.9"/><circle cx="1245.2" cy="193.6" r="3.4"/>
<rect x="1234.4" y="293.3" width="61.8" height="1.9"/><circle cx="1234.4" cy="294.3" r="3.4"/>
<rect x="1245.4" y="506.4" width="55.8" height="1.9"/><circle cx="1245.4" cy="507.4" r="3.4"/>
</g></svg>

<!-- annotation text -->
<div class="ann" style="left:3.6px;top:54px;font-size:14.4px;letter-spacing:0.68px;transform-origin:0 0;transform:scaleX(1.11);">Parser Basic Information</div>
<div class="ann" style="left:2.4px;top:94.4px;font-size:13.8px;letter-spacing:0.4px;transform-origin:0 0;transform:scaleX(1.066);">Source of Sample Text</div>
<div class="ann" style="left:1296.6px;top:99.2px;font-size:13.5px;letter-spacing:0.3px;transform-origin:0 0;transform:scaleX(1.1);">Parser Qualification</div>
<div class="ann" style="left:50.2px;top:281.8px;font-size:15.5px;letter-spacing:0.1px;">Parser Input</div>
<div class="ann" style="left:1292.8px;top:185.8px;font-size:15.2px;letter-spacing:0.32px;">Parser Group</div>
<div class="ann" style="left:1304px;top:286.5px;font-size:15.2px;letter-spacing:0.3px;">Parser Rules</div>
<div class="ann" style="left:1309.6px;top:499.8px;font-size:15.2px;letter-spacing:0.25px;">Parser Output</div>

<!-- circles -->
<div class="circ" style="left:152.4px;top:24px;">1</div>
<div class="circ" style="left:1262.6px;top:71.4px;">2</div>
<div class="circ" style="left:158.2px;top:117.4px;">3</div>
<div class="circ" style="left:164px;top:267.8px;">4</div>
<div class="circ" style="left:1260.2px;top:168.3px;">5</div>
<div class="circ" style="left:1271px;top:269px;">6</div>
<div class="circ" style="left:1258px;top:483px;">7</div>
</body></html>
